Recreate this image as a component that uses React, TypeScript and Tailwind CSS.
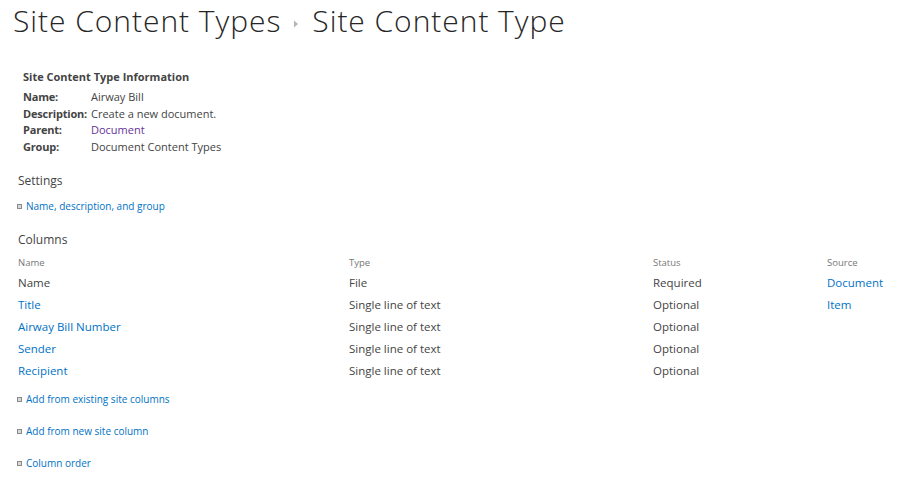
import React from "react";

const font = { fontFamily: '"Open Sans", "Noto Sans", sans-serif' };

function Bullet() {
  return <span className="inline-block w-[5px] h-[5px] border border-[#8a8a8a] bg-[#d8d8d8] mr-[4px] shrink-0" />;
}

function ActionLink(props: { label: string }) {
  return (
    <div className="flex items-center h-[32px] pl-[17px]">
      <Bullet />
      <a className="text-[#0072c6] text-[10px] cursor-pointer">{props.label}</a>
    </div>
  );
}

const rows = [
  { name: "Name", link: false, type: "File", status: "Required", source: "Document" },
  { name: "Title", link: true, type: "Single line of text", status: "Optional", source: "Item" },
  { name: "Airway Bill Number", link: true, type: "Single line of text", status: "Optional", source: "" },
  { name: "Sender", link: true, type: "Single line of text", status: "Optional", source: "" },
  { name: "Recipient", link: true, type: "Single line of text", status: "Optional", source: "" },
];

export default function App() {
  return (
    <div style={font} className="w-[899px] h-[482px] bg-white text-[#444] overflow-hidden">
      {/* page title */}
      <div className="flex items-center pl-[13px] pt-[1px] h-[40px] text-[#262626] text-[30px] font-[350] tracking-[0.95px]">
        <span>Site Content Types</span>
        <svg width="6" height="8" viewBox="0 0 6 8" className="ml-[12px] mr-[13px] mt-[6px]">
          <path d="M1 0.5 L5 4 L1 7.5 Z" fill="#b5b5b5" />
        </svg>
        <span>Site Content Type</span>
      </div>

      {/* info */}
      <div className="pl-[23px] pt-[27px] text-[11px]">
        <div className="font-bold h-[19px] leading-[19px]">Site Content Type Information</div>
        <div className="grid grid-cols-[68px_1fr] auto-rows-[16.7px] leading-[16.7px] mt-[3px]">
          <span className="font-bold tracking-[-0.2px]">Name:</span>
          <span>Airway Bill</span>
          <span className="font-bold tracking-[-0.2px]">Description:</span>
          <span>Create a new document.</span>
          <span className="font-bold tracking-[-0.2px]">Parent:</span>
          <a className="text-[#663399]">Document</a>
          <span className="font-bold tracking-[-0.2px]">Group:</span>
          <span>Document Content Types</span>
        </div>
      </div>

      {/* settings */}
      <div className="pl-[18px] mt-[15px] h-[20px] leading-[20px] text-[12px]">Settings</div>
      <ActionLink label="Name, description, and group" />

      {/* columns */}
      <div className="pl-[18px] mt-[6px] h-[22px] leading-[22px] text-[12px]">Columns</div>
      <div className="pl-[18px] pt-[3px]">
        <div className="grid grid-cols-[331px_304px_174px_1fr] h-[18px] items-center text-[9.5px] text-[#777]">
          <span>Name</span>
          <span>Type</span>
          <span>Status</span>
          <span>Source</span>
        </div>
        {rows.map((r) => (
          <div key={r.name} className="grid grid-cols-[331px_304px_174px_1fr] h-[22px] items-center text-[11.5px]">
            <span className={r.link ? "text-[#0072c6]" : ""}>{r.name}</span>
            <span>{r.type}</span>
            <span>{r.status}</span>
            <span className="text-[#0072c6]">{r.source}</span>
          </div>
        ))}
      </div>

      <div className="mt-[2px]">
        <ActionLink label="Add from existing site columns" />
        <ActionLink label="Add from new site column" />
        <ActionLink label="Column order" />
      </div>
    </div>
  );
}
